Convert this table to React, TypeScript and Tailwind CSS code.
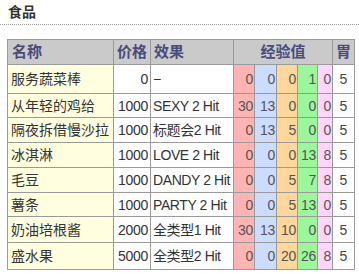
import React from "react";

type Row = {
  name: string;
  price: string;
  effect: string;
  exp: string[];
  stomach: string;
  h: string;
};

const rows: Row[] = [
  { name: "服务蔬菜棒", price: "0", effect: "−", exp: ["0", "0", "0", "1", "0"], stomach: "5", h: "h-[29px]" },
  { name: "从年轻的鸡给", price: "1000", effect: "SEXY 2 Hit", exp: ["30", "13", "0", "0", "0"], stomach: "5", h: "h-[24px]" },
  { name: "隔夜拆借慢沙拉", price: "1000", effect: "标题会2 Hit", exp: ["0", "13", "5", "0", "0"], stomach: "5", h: "h-[25px]" },
  { name: "冰淇淋", price: "1000", effect: "LOVE 2 Hit", exp: ["0", "0", "0", "13", "8"], stomach: "5", h: "h-[25px]" },
  { name: "毛豆", price: "1000", effect: "DANDY 2 Hit", exp: ["0", "0", "5", "7", "8"], stomach: "5", h: "h-[25px]" },
  { name: "薯条", price: "1000", effect: "PARTY 2 Hit", exp: ["0", "0", "5", "13", "0"], stomach: "5", h: "h-[24px]" },
  { name: "奶油培根酱", price: "2000", effect: "全类型1 Hit", exp: ["30", "13", "10", "0", "0"], stomach: "5", h: "h-[26px]" },
  { name: "盛水果", price: "5000", effect: "全类型2 Hit", exp: ["0", "0", "20", "26", "8"], stomach: "5", h: "h-[27px]" },
];

const expBg = ["bg-[#ffb4b4]", "bg-[#ccdcff]", "bg-[#ffd79c]", "bg-[#9cf79c]", "bg-[#ffd6fb]"];

export default function App() {
  return (
    <div
      className="w-[359px] h-[274px] bg-white text-[#333] overflow-hidden"
      style={{ fontFamily: '"Liberation Sans", "Noto Sans CJK SC", sans-serif' }}
    >
      <div className="pl-[8px] pt-[3px] h-[24px] text-[14px] font-bold leading-[18px] text-[#333]">食品</div>
      <div className="border-t border-dotted border-[#999]" />
      <div className="pl-[7px] pt-[14px]">
        <table className="table-fixed border-collapse border border-[#8c8c8c] w-[348px] text-[14px] leading-[16px]">
          <colgroup>
            <col className="w-[106px]" />
            <col className="w-[37px]" />
            <col className="w-[83px]" />
            <col className="w-[21px]" />
            <col className="w-[22px]" />
            <col className="w-[21px]" />
            <col className="w-[20px]" />
            <col className="w-[15px]" />
            <col className="w-[22px]" />
          </colgroup>
          <thead>
            <tr className="h-[25px] bg-[#cacaca] text-[#4b4b7d] font-bold text-[15px]">
              <th className="border border-[#9a9a9a] text-left pl-[4px] font-bold">名称</th>
              <th className="border border-[#9a9a9a] text-center font-bold px-0">价格</th>
              <th className="border border-[#9a9a9a] text-left pl-[3px] font-bold">效果</th>
              <th colSpan={5} className="border border-[#9a9a9a] text-center font-bold">经验值</th>
              <th className="border border-[#9a9a9a] text-center font-bold">胃</th>
            </tr>
          </thead>
          <tbody>
            {rows.map((r) => (
              <tr key={r.name} className={r.h}>
                <td className="border border-[#9a9a9a] bg-[#ffffe0] pl-[3px] whitespace-nowrap overflow-hidden">{r.name}</td>
                <td className="border border-[#9a9a9a] text-right pr-[2px] whitespace-nowrap tracking-[-0.3px]">{r.price}</td>
                <td className="border border-[#9a9a9a] pl-[2px] whitespace-nowrap overflow-hidden tracking-[-0.4px]">{r.effect}</td>
                {r.exp.map((v, i) => (
                  <td
                    key={i}
                    className={`border border-[#9a9a9a] text-right pr-[1px] text-[#555] whitespace-nowrap tracking-[-0.3px] ${expBg[i]}`}
                  >
                    {v}
                  </td>
                ))}
                <td className="border border-[#9a9a9a] text-center text-[#444]">{r.stomach}</td>
              </tr>
            ))}
          </tbody>
        </table>
      </div>
    </div>
  );
}
